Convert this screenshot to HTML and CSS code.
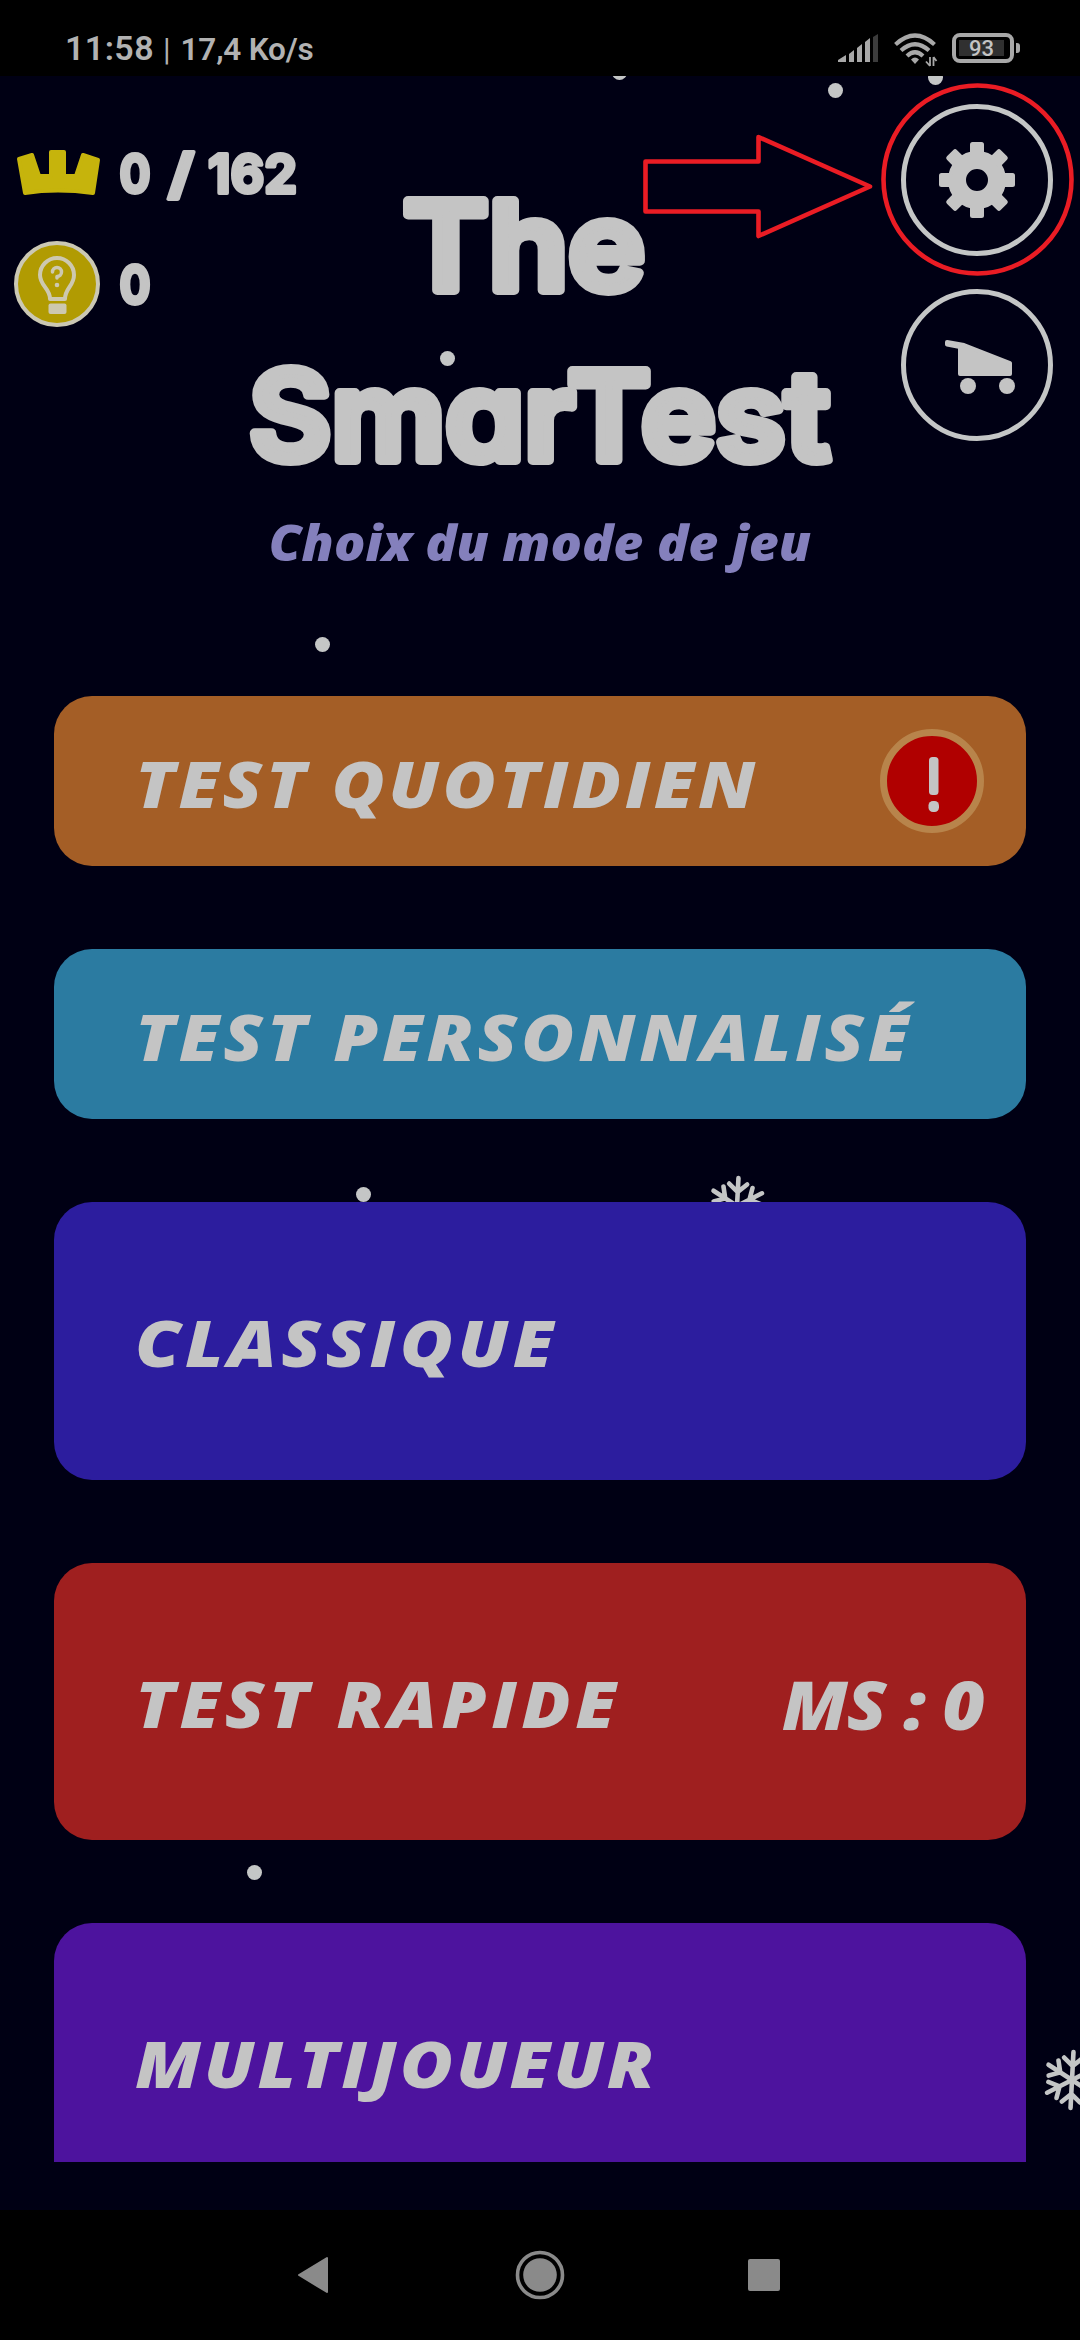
FILE: index.html
```html
<!DOCTYPE html>
<html lang="fr">
<head>
  <meta charset="UTF-8">
  <meta name="viewport" content="width=device-width, initial-scale=1.0">
  <title>The SmarTest</title>
  <link rel="stylesheet" href="styles.css">
</head>
<body>
  <!-- Shared shapes -->
  <svg width="0" height="0" class="defs">
    <symbol id="flake" viewBox="-32 -32 64 64">
      <g id="flake-arms" fill="none" stroke="#c4c6c6" stroke-width="4.6" stroke-linecap="round" transform="rotate(3)">
        <path d="M0 0V-28M0 -14L-9 -22M0 -14L9 -22"/>
        <path d="M0 0V-28M0 -14L-9 -22M0 -14L9 -22" transform="rotate(60)"/>
        <path d="M0 0V-28M0 -14L-9 -22M0 -14L9 -22" transform="rotate(120)"/>
        <path d="M0 0V-28M0 -14L-9 -22M0 -14L9 -22" transform="rotate(180)"/>
        <path d="M0 0V-28M0 -14L-9 -22M0 -14L9 -22" transform="rotate(240)"/>
        <path d="M0 0V-28M0 -14L-9 -22M0 -14L9 -22" transform="rotate(300)"/>
      </g>
    </symbol>
  </svg>

  <!-- Status Bar -->
  <div class="status-bar">
    <div class="status-left">
      <span class="clock">11:58</span>
      <span class="divider">|</span>
      <span class="speed">17,4 Ko/s</span>
    </div>
    <div class="status-right">
      <svg class="signal" width="41" height="30" viewBox="0 0 41 30">
        <path fill="#a8a8a8" d="M0 28V26L8 21V28ZM11 28V20L16 16V28ZM19 28V14L24 10V28ZM27 28V8L32 4V28Z"/>
        <path fill="#3c3c3c" d="M35 28V3L40 0V28Z"/>
      </svg>
      <svg class="wifi" width="44" height="34" viewBox="0 0 44 34">
        <g fill="none" stroke="#a8a8a8" stroke-width="4.2">
          <path d="M1.500 11.500Q21 -6.500 40.500 11.500"/>
          <path d="M7 17.500Q21 5 35 17.500"/>
          <path d="M13 23Q21 15.500 29 23"/>
        </g>
        <path fill="#a8a8a8" d="M17 26.500Q21 22.500 25 26.500L21 31Z"/>
        <path d="M36 24V33M39.500 24V33M36 33L32 28.500M39.500 24L42.500 28" fill="none" stroke="#a8a8a8" stroke-width="1.800"/>
      </svg>
      <div class="battery"><span>93</span></div>
    </div>
  </div>

  <!-- Home Screen -->
  <div class="home">
    <div class="snow">
      <i class="dot" style="left:612px;top:-11px"></i>
      <i class="dot" style="left:828px;top:7px"></i>
      <i class="dot" style="left:928px;top:-6px"></i>
      <i class="dot" style="left:440px;top:275px"></i>
      <i class="dot" style="left:315px;top:561px"></i>
      <i class="dot" style="left:356px;top:1111px"></i>
      <i class="dot" style="left:247px;top:1789px"></i>
      <svg class="flake" style="left:705px;top:1098px"><use href="#flake"/></svg>
      <svg class="flake" style="left:1040px;top:1972px"><use href="#flake"/></svg>
    </div>

    <div class="header">
      <div class="counters">
        <div class="counter">
          <svg width="86" height="50" viewBox="0 0 86 50">
            <path fill="#c6b40c" stroke="#c6b40c" stroke-width="4" stroke-linejoin="round" d="M5 11L18 7L25 28H37V4H50V28H62L69 7L84 12L79 45Q43 40 11 45Z"/>
          </svg>
          <svg class="count" width="184" height="52" viewBox="0 0 184 52">
            <text x="2.500" y="46" textLength="31" lengthAdjust="spacingAndGlyphs">0</text>
            <text x="51" y="46" textLength="26" lengthAdjust="spacingAndGlyphs">/</text>
            <text x="91" y="46" textLength="89" lengthAdjust="spacingAndGlyphs">162</text>
          </svg>
        </div>
        <div class="counter">
          <svg width="86" height="86" viewBox="0 0 86 86">
            <circle cx="43" cy="43" r="41" fill="#b19b02" stroke="#cbc8b4" stroke-width="4"/>
            <g fill="none" stroke="#cdc8b0" stroke-width="4" stroke-linecap="round" stroke-linejoin="round">
              <path d="M36 58C36 47 26 45 26 34A17 17 0 0 1 60 34C60 45 51 47 51 58Z"/>
              <path d="M38.500 31A4.500 4.500 0 1 1 43 35.500V37" stroke-width="3.500"/>
            </g>
            <circle cx="43" cy="44" r="2.300" fill="#cdc8b0"/>
            <rect x="34.500" y="62.500" width="18" height="10.500" rx="2" fill="#cdc8b0"/>
          </svg>
          <svg class="count" width="184" height="52" viewBox="0 0 184 52">
            <text x="2.500" y="46" textLength="31" lengthAdjust="spacingAndGlyphs">0</text>
          </svg>
        </div>
      </div>

      <div class="heading">
        <svg class="title" width="600" height="310" viewBox="0 0 600 310">
          <text x="163" y="124" textLength="242" lengthAdjust="spacingAndGlyphs">The</text>
          <text x="9" y="294" textLength="581" lengthAdjust="spacingAndGlyphs">SmarTest</text>
        </svg>
        <div class="subtitle">Choix du mode de jeu</div>
      </div>

      <div class="actions">
        <div class="round-btn">
          <svg width="80" height="80" viewBox="-40 -40 80 80" fill="#c4c4c4">
            <circle r="20" fill="none" stroke="#c4c4c4" stroke-width="18"/>
            <g id="teeth">
              <rect x="-7" y="-38" width="14" height="14" rx="2.500"/>
              <rect x="-7" y="24" width="14" height="14" rx="2.500"/>
              <rect x="-38" y="-7" width="14" height="14" rx="2.500"/>
              <rect x="24" y="-7" width="14" height="14" rx="2.500"/>
            </g>
            <use href="#teeth" transform="rotate(45)"/>
          </svg>
        </div>
        <div class="round-btn">
          <svg width="80" height="80" viewBox="-40 -40 80 80" fill="#c4c4c4">
            <path d="M-30 -23L-13 -20L33 -2V9H-17V-18L-30 -20.500Z" stroke="#c4c4c4" stroke-width="4" stroke-linejoin="round"/>
            <circle cx="-9" cy="21" r="8"/>
            <circle cx="30" cy="21" r="8"/>
          </svg>
        </div>
      </div>
    </div>

    <!-- Game Modes -->
    <div class="modes">
      <div class="mode daily">
        <span>TEST QUOTIDIEN</span>
        <svg class="alert" width="104" height="104" viewBox="0 0 104 104">
          <circle cx="52" cy="52" r="48.500" fill="#b00000" stroke="#b8844b" stroke-width="7"/>
          <rect x="49" y="28" width="9.500" height="38" rx="3.500" fill="#c4c4c4"/>
          <rect x="48.500" y="72" width="10.500" height="11" rx="4.500" fill="#c4c4c4"/>
        </svg>
      </div>
      <div class="mode custom"><span>TEST PERSONNALISÉ</span></div>
      <div class="mode tall classic"><span>CLASSIQUE</span></div>
      <div class="mode tall quick">
        <span>TEST RAPIDE</span>
        <span class="best">MS : 0</span>
      </div>
      <div class="mode tall multi"><span>MULTIJOUEUR</span></div>
    </div>

    <!-- Settings Hint -->
    <svg class="hint" width="460" height="210" viewBox="620 76 460 210">
      <g fill="none" stroke="#ea1c24" stroke-width="4.600">
        <path d="M645.500 161.500H758.500V137L870 186.500L758.500 236V211.500H645.500Z" stroke-linejoin="round"/>
        <circle cx="977.500" cy="179.500" r="94"/>
      </g>
    </svg>
  </div>

  <!-- Navigation Bar -->
  <div class="nav-bar">
    <svg width="32" height="38" viewBox="0 0 32 38"><path fill="#8a8a8a" stroke="#8a8a8a" stroke-width="2" stroke-linejoin="round" d="M30 2V36L2 19Z"/></svg>
    <svg width="50" height="50" viewBox="0 0 50 50">
      <circle cx="25" cy="25" r="22.500" fill="none" stroke="#8a8a8a" stroke-width="3.600"/>
      <circle cx="25" cy="25" r="16.800" fill="#8a8a8a"/>
    </svg>
    <div class="recent"></div>
  </div>
</body>
</html>
```
FILE: styles.css
```css
body {
  margin: 0;
  width: 1080px;
  height: 2340px;
  background-color: #000;
  color: #c4c4c4;
  font-family: "Open Sans", "Noto Sans", sans-serif;
  overflow: hidden;
}
svg {
  display: block;
}
.defs {
  position: absolute;
}

/* Status Bar */
.status-bar {
  display: flex;
  justify-content: space-between;
  height: 76px;
  box-sizing: border-box;
  padding: 33px 66px 0 65px;
  font-family: Roboto, sans-serif;
  font-weight: 600;
  color: #b2b2b2;
}
.status-left {
  display: flex;
  align-items: baseline;
  height: 30px;
  line-height: 30px;
}
.clock {
  font-size: 34px;
  letter-spacing: 0.4px;
}
.divider {
  font-size: 31px;
  font-weight: 400;
  margin: 0 10px 0 9px;
}
.speed {
  font-size: 31.5px;
  letter-spacing: -0.2px;
}
.status-right {
  display: flex;
}
.signal {
  margin-top: 1px;
}
.wifi {
  margin: 0 14px 0 15px;
}
.battery {
  position: relative;
  width: 62px;
  height: 30px;
  box-sizing: border-box;
  border: 4px solid #a8a8a8;
  border-radius: 8px;
  padding: 3px;
  font-size: 22px;
  font-weight: 500;
  line-height: 17px;
  text-align: center;
}
.battery span {
  display: block;
  height: 16px;
  width: 45px;
  background-color: #303030;
  color: #c4c4c4;
}
.battery::after {
  content: '';
  position: absolute;
  right: -10px;
  top: 6px;
  width: 4px;
  height: 10px;
  border-radius: 0 3px 3px 0;
  background-color: #a8a8a8;
}

/* Home Screen */
.home {
  position: relative;
  height: 2134px;
  background-color: #000014;
  overflow: hidden;
}
.snow .dot {
  position: absolute;
  width: 15px;
  height: 15px;
  border-radius: 50%;
  background-color: #c4c6c6;
}
.snow .flake {
  position: absolute;
  width: 64px;
  height: 64px;
}
.header {
  position: relative;
  display: grid;
  height: 620px;
}
.counters, .heading, .actions {
  grid-area: 1 / 1;
}
.counters {
  padding: 70px 0 0 14px;
}
.counter {
  display: flex;
  align-items: center;
  gap: 17px;
  height: 54px;
  margin-bottom: 57px;
}
.counter svg {
  flex: none;
  overflow: visible;
}
.count text {
  font-family: Inter, sans-serif;
  font-size: 54px;
  font-weight: 750;
  fill: #c4c4c4;
  stroke: #c4c4c4;
  stroke-width: 4px;
  stroke-linejoin: round;
}
.heading {
  justify-self: center;
  padding-top: 90px;
  text-align: center;
}
.title {
  overflow: visible;
}
.title text {
  font-family: Inter, sans-serif;
  font-size: 123px;
  font-weight: 620;
  font-feature-settings: "cv11";
  fill: #c4c4c4;
  stroke: #c4c4c4;
  stroke-width: 10px;
  stroke-linejoin: round;
}
.subtitle {
  margin-top: 31px;
  font-size: 49px;
  line-height: 70px;
  font-style: italic;
  font-weight: 800;
  color: #8480bc;
  white-space: nowrap;
  transform: scaleX(1.06);
}
.actions {
  justify-self: end;
  display: flex;
  flex-direction: column;
  gap: 33px;
  padding: 28px 27px 0 0;
}
.round-btn {
  width: 152px;
  height: 152px;
  box-sizing: border-box;
  border: 5.5px solid #c4c6c6;
  border-radius: 50%;
  display: flex;
  justify-content: center;
  align-items: center;
}

/* Game Modes */
.modes {
  position: relative;
  display: flex;
  flex-direction: column;
  gap: 83px;
  height: 1466px;
  padding: 0 54px;
  overflow: hidden;
}
.mode {
  flex: none;
  display: flex;
  align-items: center;
  justify-content: space-between;
  height: 170px;
  box-sizing: border-box;
  padding: 0 42px 0 81px;
  border-radius: 38px;
  font-size: 63px;
  font-style: italic;
  font-weight: 800;
  letter-spacing: 3px;
  line-height: 84px;
  white-space: nowrap;
}
.mode span {
  padding-top: 5px;
  transform: scaleX(1.15);
  transform-origin: left;
}
.tall {
  height: 277.5px;
}
.daily { background-color: #a45e26; }
.custom { background-color: #2b7ba1; letter-spacing: 3.3px; }
.classic { background-color: #2c1d9e; letter-spacing: 3.9px; }
.quick { background-color: #9f1f1f; letter-spacing: 3.9px; }
.multi { background-color: #4d139e; letter-spacing: 2.5px; }
.mode .best {
  font-size: 68px;
  letter-spacing: -1px;
  transform: scaleX(1.07);
  transform-origin: right;
}

.hint {
  position: absolute;
  right: 0;
  top: 0;
}

/* Navigation Bar */
.nav-bar {
  display: flex;
  align-items: center;
  height: 130px;
  padding-left: 297px;
}
.nav-bar svg:nth-child(2) {
  margin: 0 183px 0 186px;
}
.recent {
  width: 32px;
  height: 32px;
  border-radius: 2px;
  background-color: #8a8a8a;
}
```
